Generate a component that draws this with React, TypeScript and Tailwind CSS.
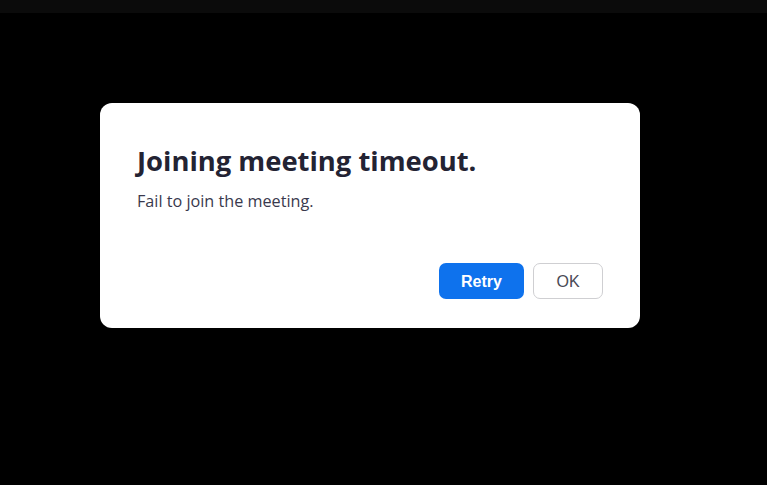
export default function App() {
  return (
    <div className="flex h-[485px] w-[767px] flex-col bg-black font-['Open_Sans',sans-serif]">
      <div className="h-[13px] bg-[#0b0b0b]" />
      <div className="pl-[100px] pt-[90px]">
        <div className="flex h-[225px] w-[540px] flex-col rounded-[12px] bg-white px-[37px] pt-[40px] pb-[29px]">
          <h1 className="text-[27.4px] leading-[36px] font-bold text-[#232333]">
            Joining meeting timeout.
          </h1>
          <p className="mt-[11px] text-[16.2px] leading-[22px] text-[#39394d]">
            Fail to join the meeting.
          </p>
          <div className="mt-auto flex justify-end gap-[9px] font-['Liberation_Sans',Arial,sans-serif]">
            <button className="h-[36px] w-[85px] rounded-[7px] bg-[#0e72ed] pt-[2px] text-[16px] font-bold text-white">
              Retry
            </button>
            <button className="h-[36px] w-[70px] rounded-[7px] border border-[#cfcfd2] bg-white pt-[2px] text-[16px] text-[#4a4a55]">
              OK
            </button>
          </div>
        </div>
      </div>
    </div>
  );
}
